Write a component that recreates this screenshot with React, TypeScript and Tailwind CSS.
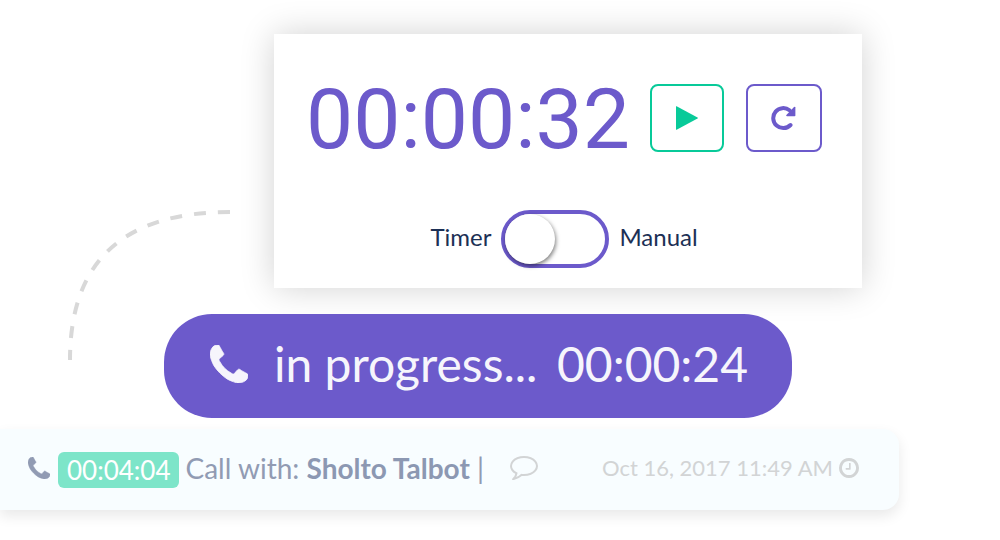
import { useState } from "react";

function PhoneIcon({ className }: { className: string }) {
  return (
    <svg viewBox="0 128 1408 1408" fill="currentColor" stroke="currentColor" strokeWidth="30" className={className} aria-hidden="true">
      <path d="M1408 1240q0 27-10 70.5t-20.5 68.5q-21 50-122 106-94 51-186 51-27 0-52.5-3.5t-57.5-12.5-47.5-14.5-55.5-20.5-49-18q-98-35-175-83-128-79-264.5-215.5t-215.5-264.5q-48-77-83-175-3-9-18-49t-20.5-55.5-14.5-47.5-12.5-57.5-3.5-52.5q0-92 51-186 56-101 106-122 25-10 68.5-20.5t70.5-10.5q14 0 21 3 18 6 53 76 11 19 30 54t35 63.5 31 53.5q3 4 17.5 25t21.5 35.5 7 28.5q0 20-28.5 50t-62 55-62 53-28.5 46q0 9 5 22.5t8.5 20.5 14 24 11.5 19q76 137 174 235t235 174q2 1 19 11.5t24 14 20.5 8.5 22.5 5q18 0 46-28.5t53-62 55-62 50-28.5q14 0 28.5 7t35.5 21.5 25 17.5q25 15 53.5 31t63.5 35 54 30q70 35 76 53 3 7 3 21z" />
    </svg>
  );
}

function CommentIcon({ className }: { className: string }) {
  return (
    <svg viewBox="0 256 1792 1536" fill="currentColor" className={className} aria-hidden="true">
      <path d="M896 384q-204 0-381.5 69.5t-282 187.5-104.5 255q0 112 71.5 213.5t201.5 175.5l87 50-27 96q-24 91-70 172 152-63 275-171l43-38 57 6q69 8 130 8 204 0 381.5-69.5t282-187.5 104.5-255-104.5-255-282-187.5-381.5-69.5zm896 512q0 174-120 321.5t-326 233-450 85.5q-70 0-145-8-198 175-460 242-49 14-114 22h-5q-15 0-27-10.5t-16-27.5v-1q-3-4-.5-12t2-10 4.5-9.5l6-9 7-8.5 8-9q7-8 31-34.5t34.5-38 31-39.5 32.5-51 27-59 26-76q-157-89-247.5-220t-90.5-281q0-174 120-321.5t326-233 450-85.5 450 85.5 326 233 120 321.5z" />
    </svg>
  );
}

function ClockIcon({ className }: { className: string }) {
  return (
    <svg viewBox="128 128 1536 1536" fill="currentColor" className={className} aria-hidden="true">
      <path d="M1024 544v448q0 14-9 23t-23 9h-320q-14 0-23-9t-9-23v-64q0-14 9-23t23-9h224v-352q0-14 9-23t23-9h64q14 0 23 9t9 23zm416 352q0-148-73-273t-198-198-273-73-273 73-198 198-73 273 73 273 198 198 273 73 273-73 198-198 73-273zm224 0q0 209-103 385.5t-279.5 279.5-385.5 103-385.5-103-279.5-279.5-103-385.5 103-385.5 279.5-279.5 385.5-103 385.5 103 279.5 279.5 103 385.5z" />
    </svg>
  );
}

function TimerCard() {
  const [manual, setManual] = useState(false);
  return (
    <section className="min-w-0 flex-1 bg-white px-8 pt-[50px] pb-5 shadow-[0_0_32px_rgba(0,0,0,0.18)]">
      <div className="flex items-start">
        <time className="font-[Roboto,sans-serif] text-[84px] leading-[72px] text-[#6c5acb]">00:00:32</time>
        <div className="ml-auto flex gap-[22px] pr-2">
          <button type="button" aria-label="Start" className="flex h-[68px] w-[74px] items-center justify-center rounded-lg border-2 border-[#08ca99] text-[#08ca99]">
            <svg viewBox="0 0 22 24" fill="currentColor" className="h-6 w-[22px]" aria-hidden="true">
              <path d="M0 0.6Q0 0 0.6 0.3L21.5 11.5Q22.3 12 21.5 12.5L0.6 23.8Q0 24 0 23.4z" />
            </svg>
          </button>
          <button type="button" aria-label="Reset" className="flex h-[68px] w-[76px] items-center justify-center rounded-lg border-2 border-[#6c5acb] text-[#6c5acb]">
            <svg viewBox="0 0 26 26" className="size-[26px]" aria-hidden="true">
              <path d="M18.5 5.3A10 10 0 1 0 19.5 20" fill="none" stroke="currentColor" strokeWidth="4" strokeLinecap="round" />
              <path d="M24.4 2.6V10.5Q24.4 11.3 23.6 11.3H16Q14.5 11.1 15.4 10L23 2.1Q24.2 1.3 24.4 2.6z" fill="currentColor" />
            </svg>
          </button>
        </div>
      </div>
      <div className="mt-[54px] flex items-center justify-center gap-[10px] pr-2 text-2xl text-[#1c3055]">
        <label htmlFor="mode" className="pb-1">Timer</label>
        <input
          id="mode"
          type="checkbox"
          role="switch"
          aria-label="Manual mode"
          checked={manual}
          onChange={(e) => setManual(e.target.checked)}
          className="h-[58px] w-[108px] appearance-none rounded-full border-4 border-[#6c5acb] bg-white before:block before:size-[50px] before:rounded-full before:bg-white before:shadow-[1px_2px_4px_rgba(0,0,0,0.5)] before:content-[''] checked:before:translate-x-[50px]"
        />
        <label htmlFor="mode" className="pb-1">Manual</label>
      </div>
    </section>
  );
}

export default function App() {
  return (
    <main className="min-h-screen overflow-hidden bg-white pt-[34px] font-[Lato,sans-serif]">
      <div className="flex gap-11 pr-[138px] pl-[68px]">
        <svg viewBox="0 0 162 254" className="h-[254px] w-[162px] shrink-0 overflow-visible" fill="none" aria-hidden="true">
          <path d="M162 178Q2 178 2 326" stroke="#d8d8d8" strokeWidth="4" strokeDasharray="12 12" />
        </svg>
        <TimerCard />
      </div>

      <div className="relative mt-[26px] mr-[208px] ml-[164px] flex h-[104px] items-center rounded-[48px] bg-[#6c5acb] pr-11 pb-1 pl-[46px] text-[48px] whitespace-nowrap text-[#f6f5fc]">
        <PhoneIcon className="mr-[26px] size-[38px] shrink-0" />
        <span>in progress...</span>
        <time className="ml-auto">00:00:24</time>
      </div>

      <article className="mt-[11px] mr-[101px] flex h-[81px] items-center rounded-r-2xl bg-[#f8fdff] pr-10 pb-1 pl-7 text-[28px] whitespace-nowrap text-[#919bb3] shadow-[0_6px_14px_rgba(0,0,0,0.09)]">
        <PhoneIcon className="mr-2 size-[22px] shrink-0" />
        <time className="mt-1 mr-[6px] rounded-md bg-[#7de5c9] px-[9px] text-[26px] leading-9 text-white">00:04:04</time>
        <p>
          Call with: <strong className="font-bold text-[#8c98b2]">Sholto Talbot</strong> |
        </p>
        <button type="button" aria-label="Comment" className="ml-[26px] text-[#d2d4d5]">
          <CommentIcon className="h-6 w-7" />
        </button>
        <div className="ml-auto flex items-center gap-[6px] text-[22px] text-[#d2d4d5]">
          <time>Oct 16, 2017 11:49 AM</time>
          <ClockIcon className="size-5" />
        </div>
      </article>
    </main>
  );
}
